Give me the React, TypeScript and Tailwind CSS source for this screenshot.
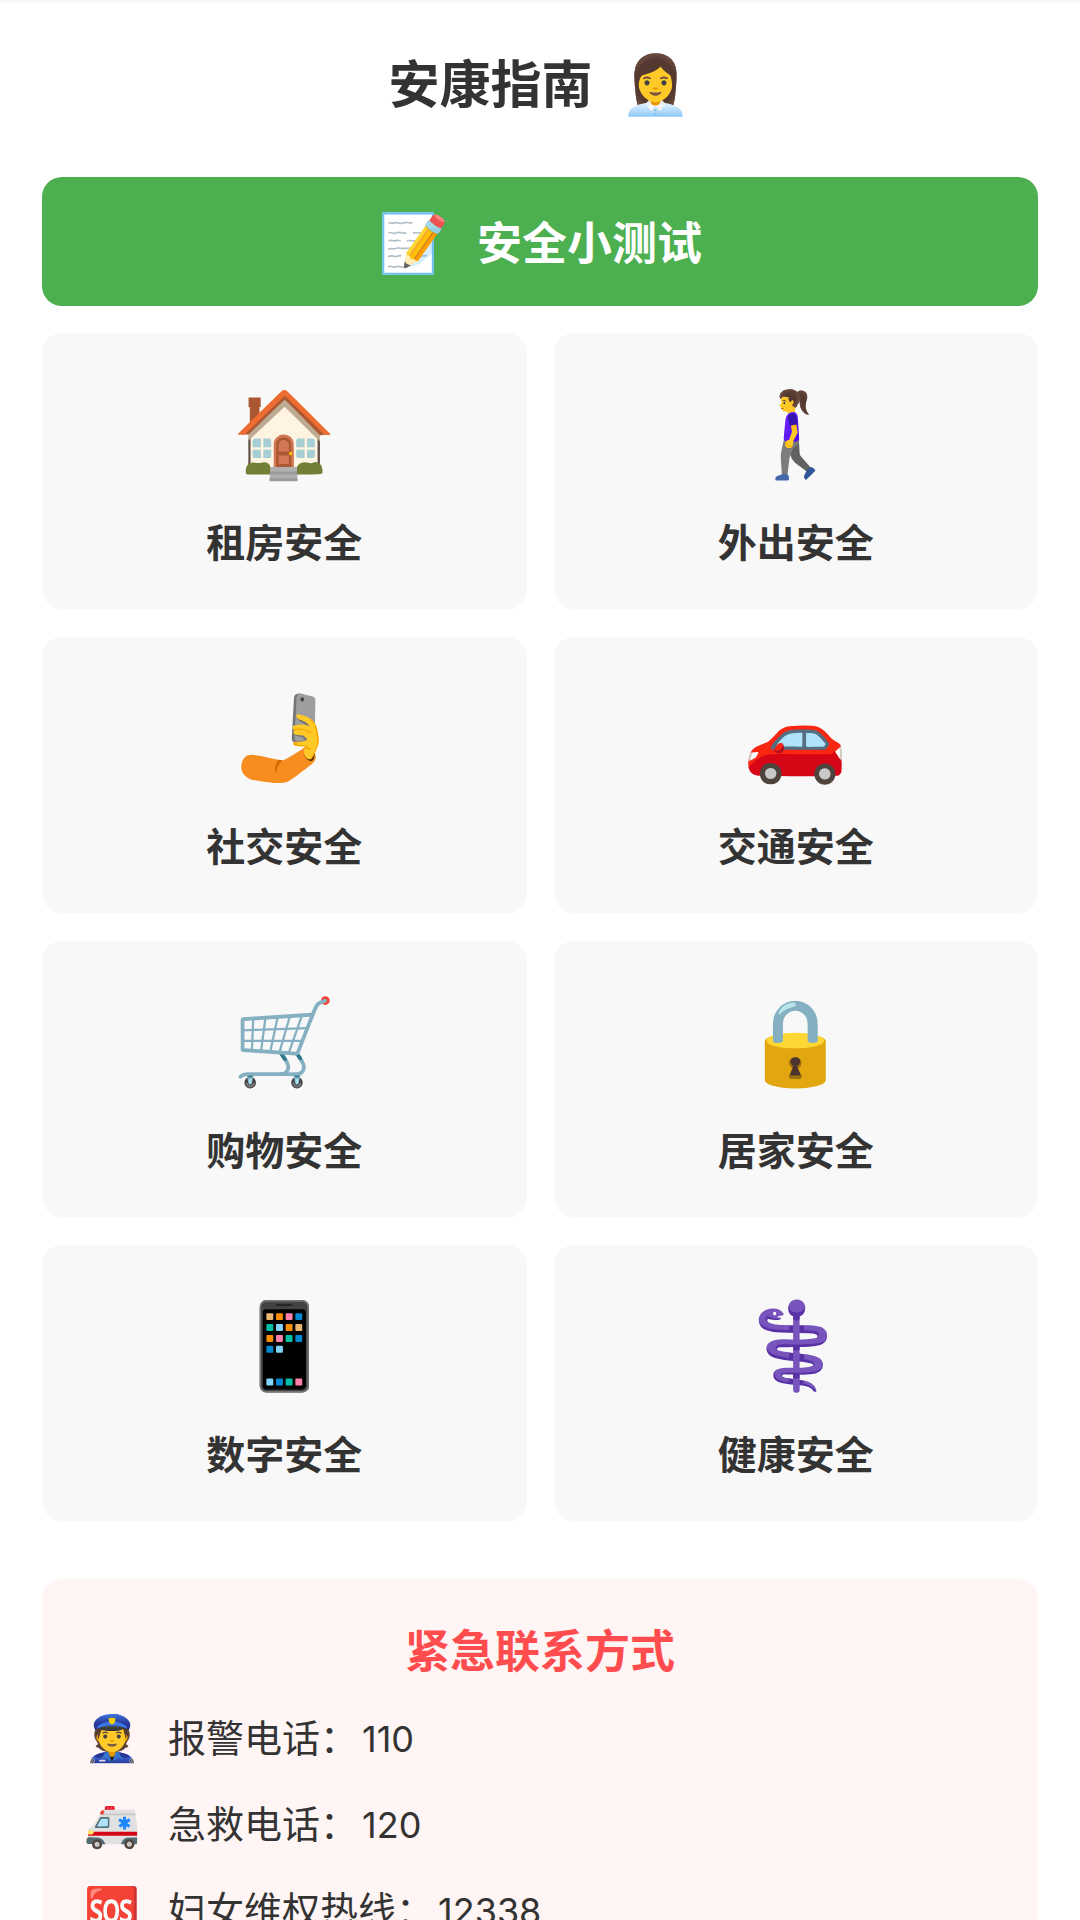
const topics = [
  { icon: "🏠", label: "租房安全" },
  { icon: "🚶‍♀️", label: "外出安全" },
  { icon: "🤳", label: "社交安全" },
  { icon: "🚗", label: "交通安全" },
  { icon: "🛒", label: "购物安全" },
  { icon: "🔒", label: "居家安全" },
  { icon: "📱", label: "数字安全" },
  { icon: "⚕️", label: "健康安全" },
];

const contacts = [
  { icon: "👮", label: "报警电话：", phone: "110" },
  { icon: "🚑", label: "急救电话：", phone: "120" },
  { icon: "🆘", label: "妇女维权热线：", phone: "12338" },
];

export default function App() {
  return (
    <div className="h-screen overflow-hidden border-t-3 border-[#f7f7f7] bg-white font-['Inter','Noto_Sans_CJK_SC',sans-serif] text-[#333]">
      <main className="px-[42px] pt-[42px]">
        <h1 className="mb-[52px] flex h-20 items-center justify-center gap-7 text-[51px] font-bold">
          <span>安康指南</span>
          <span aria-hidden="true" className="font-['Noto_Color_Emoji'] text-[57px] leading-none font-normal">👩‍💼</span>
        </h1>

        <button type="button" className="flex h-[129px] w-full items-center justify-center gap-7 rounded-[20px] bg-[#4caf50] pt-1 text-[45px] font-bold text-white">
          <span aria-hidden="true" className="font-['Noto_Color_Emoji'] text-[57px] leading-none font-normal">📝</span>
          <span>安全小测试</span>
        </button>

        <div className="mt-[27px] grid grid-cols-2 gap-x-[27px] gap-y-7">
          {topics.map((topic) => (
            <button key={topic.label} type="button" className="flex flex-col items-center gap-[26px] rounded-[20px] bg-[#f8f8f8] pt-11 pb-[42px]">
              <span aria-hidden="true" className="font-['Noto_Color_Emoji'] text-[84px] leading-[116px]">{topic.icon}</span>
              <span className="text-[39px] leading-[48px] font-bold">{topic.label}</span>
            </button>
          ))}
        </div>

        <section className="mt-[58px] rounded-[20px] bg-[#fff5f4] p-[42px]">
          <h2 className="mb-3 text-center text-[45px] leading-[62px] font-bold text-[#ff4d4f]">紧急联系方式</h2>
          <ul>
            {contacts.map((contact) => (
              <li key={contact.phone} className="flex h-[86px] items-center gap-7 text-[38px]">
                <span aria-hidden="true" className="font-['Noto_Color_Emoji'] text-[45px] leading-none">{contact.icon}</span>
                <span>
                  {contact.label}
                  <a href={`tel:${contact.phone}`} className="ml-1 text-[36px]">{contact.phone}</a>
                </span>
              </li>
            ))}
          </ul>
        </section>
      </main>
    </div>
  );
}
